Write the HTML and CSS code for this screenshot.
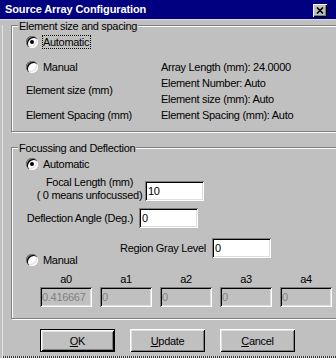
FILE: index.html
```html
<!DOCTYPE html>
<html lang="en">
<head>
  <meta charset="UTF-8">
  <title>Source Array Configuration</title>
  <link rel="stylesheet" href="styles.css">
</head>
<body>
  <div class="window">
    <div class="titlebar">
      <span class="title">Source Array Configuration</span>
      <span class="close">
        <svg width="8" height="7" viewBox="0 0 8 7"><path d="M1 0.5 L7 6.5 M7 0.5 L1 6.5" stroke="#000" stroke-width="1.6"/></svg>
      </span>
    </div>
    <div class="client">
      <div class="group group--size">
        <div class="legend">Element size and spacing</div>
        <label class="option option--top"><span class="radio radio--on"></span><span class="focus">Automatic</span></label>
        <div class="size-grid">
          <div class="size-left">
            <label class="option"><span class="radio"></span><span class="opt-text">Manual</span></label>
            <div class="size-lbl size-lbl--a">Element size (mm)</div>
            <div class="size-lbl size-lbl--b">Element Spacing (mm)</div>
          </div>
          <div class="size-info">
            <div>Array Length (mm): 24.0000</div>
            <div>Element Number: Auto</div>
            <div>Element size (mm): Auto</div>
            <div>Element Spacing (mm): Auto</div>
          </div>
        </div>
      </div>

      <div class="group group--focus">
        <div class="legend">Focussing and Deflection</div>
        <label class="option option--top"><span class="radio radio--on"></span><span class="opt-text">Automatic</span></label>
        <div class="row row--focal">
          <div class="focal-lbl">Focal Length (mm)<br>( 0 means unfocussed)</div>
          <input class="edit edit--focal" type="text" value="10">
        </div>
        <div class="row row--deflect">
          <div class="deflect-lbl">Deflection Angle (Deg.)</div>
          <input class="edit" type="text" value="0">
        </div>
        <div class="manual-row">
          <label class="option option--manual"><span class="radio"></span><span class="opt-text">Manual</span></label>
          <div class="row row--region">
            <span>Region Gray Level</span>
            <input class="edit" type="text" value="0">
          </div>
        </div>
        <div class="coeffs">
          <div class="coef"><span>a0</span><input class="edit edit--off" type="text" value="0.416667" disabled></div>
          <div class="coef"><span>a1</span><input class="edit edit--off" type="text" value="0" disabled></div>
          <div class="coef"><span>a2</span><input class="edit edit--off" type="text" value="0" disabled></div>
          <div class="coef"><span>a3</span><input class="edit edit--off" type="text" value="0" disabled></div>
          <div class="coef"><span>a4</span><input class="edit edit--off" type="text" value="0" disabled></div>
        </div>
      </div>

      <div class="buttons">
        <button class="btn btn--default"><u>O</u>K</button>
        <button class="btn"><u>U</u>pdate</button>
        <button class="btn"><u>C</u>ancel</button>
      </div>
      <div class="frame-bottom"></div>
    </div>
  </div>
</body>
</html>
```

FILE: styles.css
```css
html, body {
  margin: 0;
  padding: 0;
}
body {
  font-family: "Liberation Sans", Arial, sans-serif;
  font-size: 11px;
  letter-spacing: -0.3px;
  color: #000;
  background: #c0c0c0;
}
.window {
  width: 336px;
  height: 358px;
  overflow: hidden;
  background: #c0c0c0;
  white-space: nowrap;
}
.titlebar {
  height: 19px;
  background: #000080;
  border-bottom: 1px solid #dcdcdc;
  display: flex;
  align-items: center;
  justify-content: space-between;
  padding: 0 9px 0 5px;
}
.title {
  color: #fff;
  font-weight: 700;
  font-size: 11px;
  line-height: 13px;
  letter-spacing: -0.1px;
}
.close {
  width: 14px;
  height: 13px;
  margin-top: 1px;
  background: #c0c0c0;
  box-shadow: inset 1px 1px #fff, inset -1px -1px #000, inset -2px -2px #808080;
  display: flex;
  align-items: center;
  justify-content: center;
}
.client {
  margin-left: 2px;
  border-left: 1px solid #e4e4e4;
  height: 338px;
}
.group {
  margin-left: 8px;
  margin-right: -30px;
  border: 1px solid #808080;
  box-shadow: inset 1px 1px #fff, 1px 1px #fff;
  padding: 0 0 0 14px;
}
.group--size {
  margin-top: 5px;
  padding-bottom: 8px;
}
.group--focus {
  margin-top: 15px;
  padding-bottom: 11px;
}
.legend {
  width: max-content;
  margin: -6px 0 0 -8px;
  padding: 0 1px;
  line-height: 12px;
  background: #c0c0c0;
}
.option {
  display: flex;
  align-items: center;
  height: 16px;
}
.option--top {
  margin-top: 2px;
}
.radio {
  position: relative;
  width: 12px;
  height: 12px;
  border-radius: 50%;
  background: #fff;
  box-shadow: inset 1px 1px #808080, inset 2px 2px #000, inset -1px -1px #fff, inset -2px -2px #dfdfdf;
  flex: none;
}
.radio--on::after {
  content: "";
  position: absolute;
  left: 4px;
  top: 4px;
  width: 4px;
  height: 4px;
  border-radius: 50%;
  background: #000;
}
.opt-text {
  margin-left: 5px;
}
.focus {
  margin-left: 4px;
  border: 1px dotted #000;
  line-height: 12px;
  padding: 0 1px 0 0;
}
.size-grid {
  display: grid;
  grid-template-columns: 135px auto;
  margin-top: 9px;
}
.size-lbl {
  line-height: 16px;
}
.size-lbl--a {
  margin-top: 7px;
}
.size-lbl--b {
  margin-top: 9px;
}
.size-info div {
  line-height: 16px;
}
.row {
  display: flex;
  align-items: center;
}
.row--focal {
  align-items: flex-start;
  margin-top: 4px;
}
.focal-lbl {
  width: 109px;
  margin-left: 9px;
  text-align: center;
  line-height: 13px;
}
.edit--focal {
  margin: 5px 0 0 1px;
}
.row--deflect {
  margin-top: 6px;
}
.deflect-lbl {
  width: 111px;
  margin-left: -4px;
  text-align: right;
  margin-right: 6px;
}
.manual-row {
  display: grid;
  grid-template-columns: 94px auto;
  align-items: start;
  margin-top: 10px;
}
.option--manual {
  margin-top: 14px;
}
.row--region span {
  margin-right: 6px;
}
.edit {
  width: 59px;
  height: 20px;
  box-sizing: border-box;
  border: none;
  outline: none;
  padding: 0 0 0 3px;
  font-family: "Liberation Sans", Arial, sans-serif;
  font-size: 11px;
  letter-spacing: -0.3px;
  color: #000;
  background: #fff;
  box-shadow: inset 1px 1px #808080, inset -1px -1px #fff, inset 2px 2px #000, inset -2px -2px #dfdfdf;
}
.coeffs {
  display: grid;
  grid-template-columns: repeat(5, 52px);
  column-gap: 8px;
  margin: 3px 0 0 14px;
}
.coef {
  display: flex;
  flex-direction: column;
  align-items: center;
}
.coef span {
  line-height: 16px;
}
.edit--off {
  width: 52px;
  padding-left: 2px;
  background: #c0c0c0;
  color: #808080;
}
.buttons {
  display: flex;
  gap: 15px;
  margin: 10px 0 0 37px;
}
.btn {
  width: 75px;
  height: 23px;
  padding: 0;
  border: none;
  background: #c0c0c0;
  font-family: "Liberation Sans", Arial, sans-serif;
  font-size: 11px;
  letter-spacing: -0.3px;
  color: #000;
  box-shadow: inset 1px 1px #fff, inset -1px -1px #000, inset 2px 2px #dfdfdf, inset -2px -2px #808080;
}
.btn--default {
  border: 1px solid #000;
}
.frame-bottom {
  margin-top: 4px;
  height: 2px;
  background: repeating-linear-gradient(90deg, #3a3a3a 0 1px, #d8d8d8 1px 2px);
}
```
